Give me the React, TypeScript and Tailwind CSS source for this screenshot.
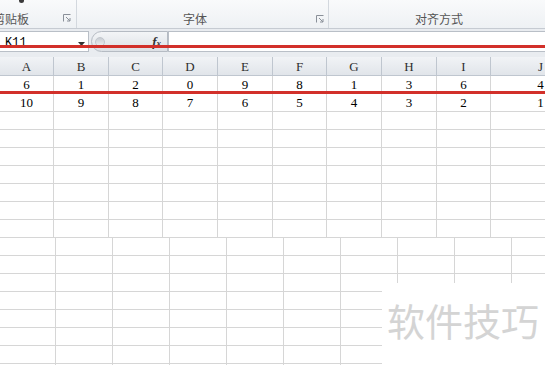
const heads = ['A', 'B', 'C', 'D', 'E', 'F', 'G', 'H', 'I', 'J']
const upperWidths = [54, 55, 54, 55, 55, 54, 55, 55, 54, 100]
const lowerWidths = [56, 57, 57, 57, 57, 57, 57, 57, 57, 100]
const data = [
  ['6', '1', '2', '0', '9', '8', '1', '3', '6', '4'],
  ['10', '9', '8', '7', '6', '5', '4', '3', '2', '1'],
]

const cjk = "font-['Microsoft_YaHei','Noto_Sans_CJK_SC',sans-serif]"

function Launcher() {
  return (
    <svg width="8" height="8" viewBox="0 0 8 8" className="shrink-0">
      <path d="M0.5 7.5V0.5H7.5" fill="none" stroke="#8a9099" strokeWidth="1" />
      <path d="M3 3L7 7M7 4V7H4" fill="none" stroke="#8a9099" strokeWidth="1" />
    </svg>
  )
}

function GridRow({ widths, cells }: { widths: number[]; cells?: string[] }) {
  return (
    <div className="flex h-[18px] shrink-0">
      {widths.map((w, i) => (
        <div
          key={i}
          style={{ width: w }}
          className="shrink-0 flex items-end justify-center pb-[1px] border-r border-b border-[#d6d6d6] text-[13px] leading-[15px] text-black font-['Liberation_Serif',serif]"
        >
          {cells ? cells[i] : ''}
        </div>
      ))}
    </div>
  )
}

export default function App() {
  return (
    <div className="relative w-[545px] h-[365px] overflow-hidden bg-white">
      {/* Ribbon group labels */}
      <div className={`flex h-[29px] bg-gradient-to-b from-[#f9fafb] to-[#eef1f4] border-b border-[#c6cbd2] ${cjk} text-[12px] text-[#555]`}>
        <div className="relative w-[77px] shrink-0 flex items-end pb-[1px] border-r border-[#d3d8de]">
          <div className="absolute left-[19px] top-0 w-[5px] h-[3px] bg-[#3a3a3a] rounded-b-sm" />
          <span className="ml-[-7px] leading-[16px]">剪贴板</span>
          <div className="ml-auto mr-[5px] mb-[5px]">
            <Launcher />
          </div>
        </div>
        <div className="w-[252px] shrink-0 flex items-end pb-[1px] border-r border-[#d3d8de]">
          <span className="ml-[106px] leading-[16px]">字体</span>
          <div className="ml-auto mr-[4px] mb-[4px]">
            <Launcher />
          </div>
        </div>
        <div className="flex-1 flex items-end pb-[1px]">
          <span className="ml-[86px] leading-[16px]">对齐方式</span>
        </div>
      </div>

      {/* Formula bar */}
      <div className="flex h-[28px] pt-[2px] pb-[5px] bg-[#e9ecf0]">
        <div className="w-[89px] shrink-0 flex items-center bg-white border-y border-r border-[#b9bfc7]">
          <span className="ml-[5px] mt-[3px] text-[12px] font-['Liberation_Mono',monospace] text-black">K11</span>
          <svg width="7" height="4" viewBox="0 0 7 4" className="ml-auto mr-[3px] mt-[4px]">
            <path d="M0 0H7L3.5 4Z" fill="#333" />
          </svg>
        </div>
        <div className="ml-[2px] w-[77px] shrink-0 flex items-center rounded-l-full border border-[#b5bbc3] bg-gradient-to-b from-[#f3f5f7] to-[#dde1e6]">
          <div className="ml-[3px] w-[10px] h-[10px] rounded-full bg-gradient-to-b from-[#c9ced4] to-[#eef0f2] border border-[#c2c7cd]" />
          <span className="ml-auto mr-[6px] font-['Liberation_Serif',serif] italic font-bold text-[13px] leading-none text-[#333]">
            f<span className="text-[9px]">x</span>
          </span>
        </div>
        <div className="flex-1 bg-white border-y border-l border-[#b9bfc7]" />
      </div>

      {/* Column headers */}
      <div className="flex h-[19px]">
        {heads.map((h, i) => (
          <div
            key={h}
            style={{ width: upperWidths[i] }}
            className="shrink-0 flex items-center justify-center pt-[2px] bg-gradient-to-b from-[#f1f3f6] to-[#e1e5ea] border-r border-b border-[#bfc6cf] text-[13px] text-[#2f2f2f] font-['Liberation_Serif',serif]"
          >
            {h}
          </div>
        ))}
      </div>

      {/* Upper rows */}
      <GridRow widths={upperWidths} cells={data[0]} />
      <GridRow widths={upperWidths} cells={data[1]} />
      {Array.from({ length: 7 }).map((_, i) => (
        <GridRow key={i} widths={upperWidths} />
      ))}

      {/* Lower rows */}
      {Array.from({ length: 8 }).map((_, i) => (
        <GridRow key={i} widths={lowerWidths} />
      ))}

      {/* Red annotation lines */}
      <div className="absolute left-0 right-0 top-[45px] h-[3px] bg-[#d2302a]" />
      <div className="absolute left-0 right-0 top-[91px] h-[3px] bg-[#d2302a]" />

      {/* Watermark */}
      <div className={`absolute left-[382px] top-[283px] w-[163px] h-[82px] bg-white pl-[5px] pt-[18px] ${cjk}`}>
        <span className="text-[38px] leading-none text-[#d4d4d4] whitespace-nowrap">软件技巧</span>
      </div>
    </div>
  )
}
